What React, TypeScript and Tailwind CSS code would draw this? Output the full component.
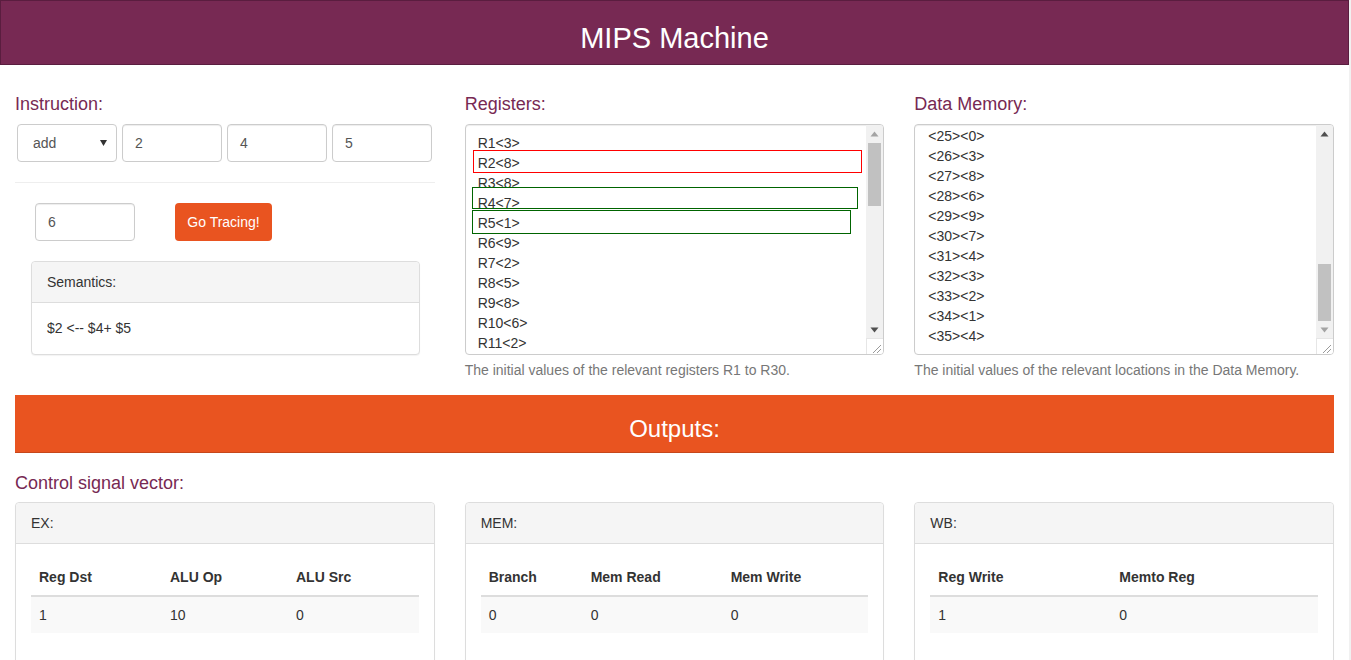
import React from "react";

const FONT = "font-['Liberation_Sans',Arial,sans-serif]";

const registers = ["R1<3>", "R2<8>", "R3<8>", "R4<7>", "R5<1>", "R6<9>", "R7<2>", "R8<5>", "R9<8>", "R10<6>", "R11<2>"];
const memory = ["<25><0>", "<26><3>", "<27><8>", "<28><6>", "<29><9>", "<30><7>", "<31><4>", "<32><3>", "<33><2>", "<34><1>", "<35><4>"];

function Arrow({ up, dark }: { up?: boolean; dark?: boolean }) {
  return (
    <svg width="9" height="6" viewBox="0 0 9 6" className="block">
      <path
        d={up ? "M0.5 5.5 L4.5 0.5 L8.5 5.5 Z" : "M0.5 0.5 L4.5 5.5 L8.5 0.5 Z"}
        fill={dark ? "#505050" : "#a3a3a3"}
      />
    </svg>
  );
}

function FakeScrollbar({ thumbTop, thumbHeight, upDark, downDark }: { thumbTop: number; thumbHeight: number; upDark?: boolean; downDark?: boolean }) {
  return (
    <div className="flex w-[17px] shrink-0 flex-col">
      <div className="relative flex-1 bg-[#f1f1f1]">
        <div className="flex h-[17px] items-center justify-center">
          <Arrow up dark={upDark} />
        </div>
        <div className="absolute left-[2px] right-[2px] bg-[#c1c1c1]" style={{ top: thumbTop, height: thumbHeight }} />
        <div className="absolute bottom-0 left-0 right-0 flex h-[17px] items-center justify-center">
          <Arrow dark={downDark} />
        </div>
      </div>
      <div className="h-[16px] border-l border-t border-[#e6e6e6] bg-white">
        <svg width="16" height="16" viewBox="0 0 16 16" className="block">
          <path d="M6 14 L14 6 M10 14 L14 10" stroke="#9a9a9a" strokeWidth="1" />
        </svg>
      </div>
    </div>
  );
}

function Label({ children }: { children: React.ReactNode }) {
  return <div className="mb-[10px] text-[18px] leading-[20px] text-[#772953]">{children}</div>;
}

function Help({ children }: { children: React.ReactNode }) {
  return <div className="mt-[5px] text-[14px] leading-[20px] text-[#777777]">{children}</div>;
}

function Panel({ title, children }: { title: string; children?: React.ReactNode }) {
  return (
    <div className="rounded-[4px] border border-[#dddddd] bg-white shadow-[0_1px_1px_rgba(0,0,0,0.05)]">
      <div className="h-[41px] rounded-t-[4px] border-b border-[#dddddd] bg-[#f5f5f5] px-[15px] pt-[10px] text-[14px] leading-[20px] text-[#333333]">
        {title}
      </div>
      {children}
    </div>
  );
}

function SignalTable({ cols }: { cols: { name: string; value: string; w?: string }[] }) {
  return (
    <div className="px-[15px] pb-[40px] pt-[15px]">
      <table className="w-full border-collapse text-[14px] leading-[20px] text-[#333333]">
        <thead>
          <tr>
            {cols.map((c) => (
              <th key={c.name} className={`border-b-2 border-[#dddddd] px-[8px] py-[8px] text-left font-bold ${c.w ?? ""}`}>
                {c.name}
              </th>
            ))}
          </tr>
        </thead>
        <tbody>
          <tr className="bg-[#f9f9f9]">
            {cols.map((c) => (
              <td key={c.name} className="px-[8px] py-[8px]">
                {c.value}
              </td>
            ))}
          </tr>
        </tbody>
      </table>
    </div>
  );
}

export default function App() {
  return (
    <div className={`flex min-h-[660px] w-[1351px] overflow-hidden bg-white ${FONT} text-[#333333]`}>
      <div className="w-[1349px] shrink-0">
        <header className="h-[65px] border border-[#5a1d3f] bg-[#772953] pt-[21px] text-center text-[29px] leading-[32px] text-white">
          MIPS Machine
        </header>

        <div className="px-[15px]">
          <div className="grid grid-cols-3 gap-x-[30px] pt-[29px]">
            {/* Instruction column */}
            <div>
              <Label>Instruction:</Label>
              <div className="ml-[2px] flex gap-[5px]">
                <div className="flex h-[38px] w-[100px] items-center justify-between rounded-[4px] border border-[#cccccc] pl-[15px] pr-[9px] text-[14px] text-[#555555]">
                  <span>add</span>
                  <svg width="7" height="6" viewBox="0 0 7 6">
                    <path d="M0 0 L7 0 L3.5 6 Z" fill="#333333" />
                  </svg>
                </div>
                {["2", "4", "5"].map((v) => (
                  <div key={v} className="flex h-[38px] w-[100px] items-center rounded-[4px] border border-[#cccccc] px-[12px] text-[14px] text-[#555555] shadow-[inset_0_1px_1px_rgba(0,0,0,0.075)]">
                    {v}
                  </div>
                ))}
              </div>
              <hr className="mt-[20px] border-t border-[#eeeeee]" />
              <div className="ml-[20px] mt-[20px] flex items-center">
                <div className="flex h-[38px] w-[100px] items-center rounded-[4px] border border-[#cccccc] px-[12px] text-[14px] text-[#555555] shadow-[inset_0_1px_1px_rgba(0,0,0,0.075)]">
                  6
                </div>
                <button className="ml-[40px] h-[38px] w-[97px] rounded-[4px] bg-[#e95420] text-[14px] text-white">Go Tracing!</button>
              </div>
              <div className="ml-[16px] mr-[15px] mt-[20px]">
                <Panel title="Semantics:">
                  <div className="h-[51px] px-[15px] pt-[15px] text-[14px] leading-[20px]">$2 &lt;-- $4+ $5</div>
                </Panel>
              </div>
            </div>

            {/* Registers column */}
            <div>
              <Label>Registers:</Label>
              <div className="flex h-[231px] overflow-hidden rounded-[4px] border border-[#cccccc] shadow-[inset_0_1px_1px_rgba(0,0,0,0.075)]">
                <div className="relative flex-1 overflow-hidden pl-[12px] pt-[8px] text-[14px] leading-[20px] text-[#333333]">
                  {registers.map((r) => (
                    <div key={r}>{r}</div>
                  ))}
                  <div className="absolute left-[7px] top-[25px] h-[23px] w-[389px] border border-[#ff0000]" />
                  <div className="absolute left-[6px] top-[62px] h-[22px] w-[386px] border border-[#006400]" />
                  <div className="absolute left-[6px] top-[85px] h-[24px] w-[379px] border border-[#006400]" />
                </div>
                <FakeScrollbar thumbTop={18} thumbHeight={63} downDark />
              </div>
              <Help>The initial values of the relevant registers R1 to R30.</Help>
            </div>

            {/* Data memory column */}
            <div>
              <Label>Data Memory:</Label>
              <div className="flex h-[231px] overflow-hidden rounded-[4px] border border-[#cccccc] shadow-[inset_0_1px_1px_rgba(0,0,0,0.075)]">
                <div className="flex-1 overflow-hidden pl-[13px] pt-[1px] text-[14px] leading-[20px] text-[#333333]">
                  {memory.map((m) => (
                    <div key={m}>{m}</div>
                  ))}
                </div>
                <FakeScrollbar thumbTop={139} thumbHeight={57} upDark />
              </div>
              <Help>The initial values of the relevant locations in the Data Memory.</Help>
            </div>
          </div>

          <div className="mt-[15px] h-[58px] border-b border-[#c6471b] bg-[#e95420] pt-[21px] text-center text-[24px] leading-[26px] text-white">
            Outputs:
          </div>

          <div className="mb-[9px] mt-[20px] text-[18px] leading-[20px] text-[#772953]">Control signal vector:</div>

          <div className="grid grid-cols-3 gap-x-[30px]">
            <Panel title="EX:">
              <SignalTable
                cols={[
                  { name: "Reg Dst", value: "1", w: "w-[131px]" },
                  { name: "ALU Op", value: "10", w: "w-[126px]" },
                  { name: "ALU Src", value: "0" },
                ]}
              />
            </Panel>
            <Panel title="MEM:">
              <SignalTable
                cols={[
                  { name: "Branch", value: "0", w: "w-[102px]" },
                  { name: "Mem Read", value: "0", w: "w-[140px]" },
                  { name: "Mem Write", value: "0" },
                ]}
              />
            </Panel>
            <Panel title="WB:">
              <SignalTable
                cols={[
                  { name: "Reg Write", value: "1", w: "w-[181px]" },
                  { name: "Memto Reg", value: "0" },
                ]}
              />
            </Panel>
          </div>
        </div>
      </div>
      <div className="w-[2px] shrink-0 bg-[#f1f1f1]" />
    </div>
  );
}
